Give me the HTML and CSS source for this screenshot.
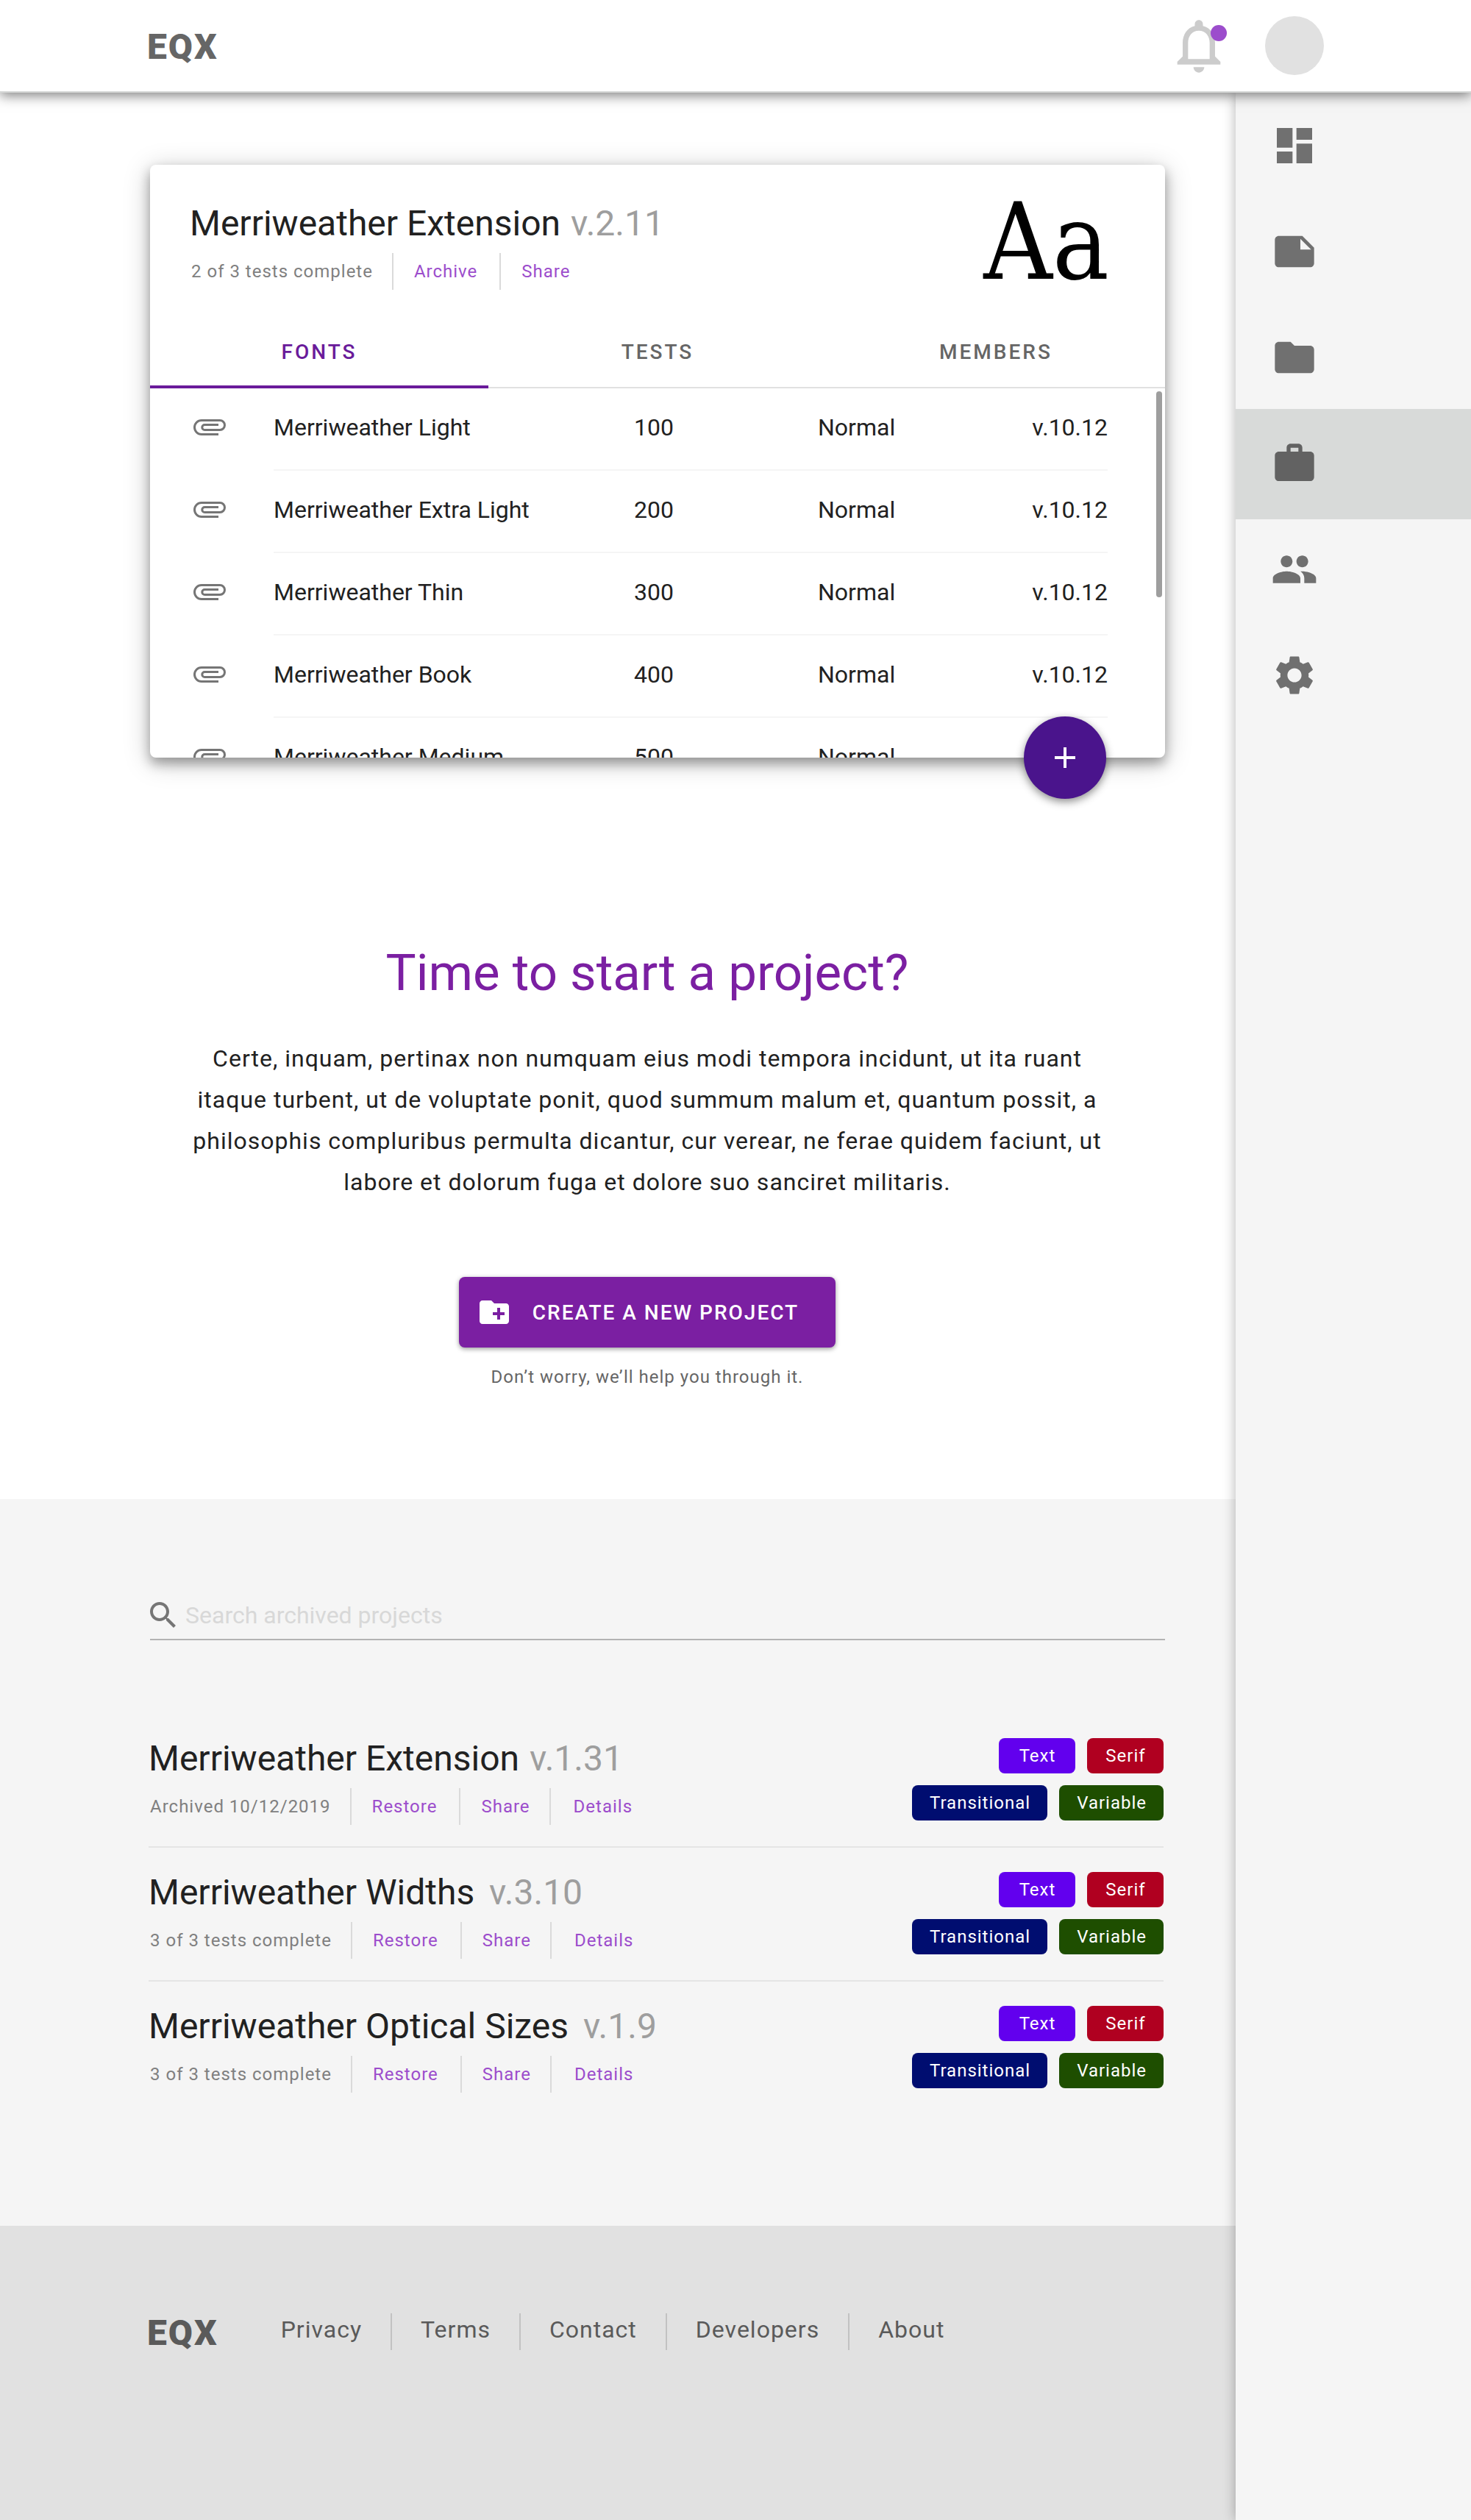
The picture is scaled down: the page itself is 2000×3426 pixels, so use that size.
FILE: index.html
```html
<!DOCTYPE html>
<html lang="en">
<head>
<meta charset="utf-8">
<meta name="viewport" content="width=device-width, initial-scale=1">
<title>EQX</title>
<link rel="stylesheet" href="styles.css">
</head>
<body>
<svg class="sprite" aria-hidden="true">
  <symbol id="clip" viewBox="0 0 44 22"><path fill="none" stroke="currentColor" stroke-width="3" d="M34 20.5H11a9.500 9.500 0 0 1 0-19H36a6.500 6.500 0 0 1 0 13H15.300a3.500 3.500 0 0 1 0-7H34"/></symbol>
</svg>

<header class="topbar">
  <a class="logo" href="#">EQX</a>
  <div class="topbar-actions">
    <button class="bell" type="button" aria-label="Notifications">
      <svg viewBox="0 0 24 24"><path d="M12 22c1.1 0 2-.9 2-2h-4c0 1.1.9 2 2 2zm6-6v-5c0-3.07-1.63-5.64-4.5-6.32V4c0-.83-.67-1.5-1.5-1.5s-1.5.67-1.5 1.5v.68C7.64 5.36 6 7.92 6 11v5l-2 2v1h16v-1l-2-2zm-2 1H8v-6c0-2.48 1.51-4.5 4-4.5s4 2.02 4 4.5v6z"/></svg>
      <span class="bell-dot"></span>
    </button>
    <button class="avatar" type="button" aria-label="Account"></button>
  </div>
</header>

<div class="layout">
  <div class="content">
    <main class="main">
      <section class="card">
        <div class="card-head">
          <div>
            <h1 class="title">Merriweather Extension <span class="version">v.2.11</span></h1>
            <div class="meta">
              <span class="meta-status">2 of 3 tests complete</span>
              <a class="meta-link" href="#">Archive</a>
              <a class="meta-link" href="#">Share</a>
            </div>
          </div>
          <div class="specimen">Aa</div>
        </div>
        <div class="tabs" role="tablist">
          <button class="tab tab-active" type="button" role="tab" aria-selected="true">FONTS</button>
          <button class="tab" type="button" role="tab" aria-selected="false">TESTS</button>
          <button class="tab" type="button" role="tab" aria-selected="false">MEMBERS</button>
        </div>
        <div class="font-list">
          <table class="fonts">
            <tr><td class="c-icon"><svg class="clip"><use href="#clip"/></svg></td><td class="c-name">Merriweather Light</td><td class="c-weight">100</td><td class="c-style">Normal</td><td class="c-version">v.10.12</td></tr>
            <tr><td class="c-icon"><svg class="clip"><use href="#clip"/></svg></td><td class="c-name">Merriweather Extra Light</td><td class="c-weight">200</td><td class="c-style">Normal</td><td class="c-version">v.10.12</td></tr>
            <tr><td class="c-icon"><svg class="clip"><use href="#clip"/></svg></td><td class="c-name">Merriweather Thin</td><td class="c-weight">300</td><td class="c-style">Normal</td><td class="c-version">v.10.12</td></tr>
            <tr><td class="c-icon"><svg class="clip"><use href="#clip"/></svg></td><td class="c-name">Merriweather Book</td><td class="c-weight">400</td><td class="c-style">Normal</td><td class="c-version">v.10.12</td></tr>
            <tr><td class="c-icon"><svg class="clip"><use href="#clip"/></svg></td><td class="c-name">Merriweather Medium</td><td class="c-weight">500</td><td class="c-style">Normal</td><td class="c-version"></td></tr>
          </table>
          <div class="scroll-thumb"></div>
        </div>
        <button class="fab" type="button" aria-label="Add font"><svg viewBox="0 0 24 24"><path d="M19 13h-6v6h-2v-6H5v-2h6V5h2v6h6v2z"/></svg></button>
      </section>

      <section class="intro">
        <h2 class="intro-title">Time to start a project?</h2>
        <p class="intro-text">Certe, inquam, pertinax non numquam eius modi tempora incidunt, ut ita ruant itaque turbent, ut de voluptate ponit, quod summum malum et, quantum possit, a philosophis compluribus permulta dicantur, cur verear, ne ferae quidem faciunt, ut labore et dolorum fuga et dolore suo sanciret militaris.</p>
        <button class="create" type="button">
          <svg viewBox="0 0 24 24"><path d="M20 6h-8l-2-2H4c-1.11 0-1.99.89-1.99 2L2 18c0 1.11.89 2 2 2h16c1.11 0 2-.89 2-2V8c0-1.11-.89-2-2-2zm-1 8h-3v3h-2v-3h-3v-2h3V9h2v3h3v2z"/></svg>
          CREATE A NEW PROJECT
        </button>
        <p class="intro-note">Don’t worry, we’ll help you through it.</p>
      </section>
    </main>

    <section class="archive">
      <label class="search">
        <svg viewBox="0 0 24 24"><path d="M15.5 14h-.79l-.28-.27C15.41 12.59 16 11.11 16 9.5 16 5.91 13.09 3 9.5 3S3 5.91 3 9.5 5.91 16 9.5 16c1.61 0 3.09-.59 4.23-1.57l.27.28v.79l5 4.99L20.49 19l-4.99-5zm-6 0C7.01 14 5 11.99 5 9.5S7.01 5 9.5 5 14 7.01 14 9.5 11.99 14 9.5 14z"/></svg>
        <input type="search" placeholder="Search archived projects" aria-label="Search archived projects">
      </label>
      <ul class="entries">
        <li class="entry">
          <div>
            <h3 class="title">Merriweather Extension <span class="version">v.1.31</span></h3>
            <div class="meta">
              <span class="meta-status">Archived 10/12/2019</span>
              <a class="meta-link" href="#">Restore</a>
              <a class="meta-link" href="#">Share</a>
              <a class="meta-link" href="#">Details</a>
            </div>
          </div>
          <div class="tags"><span class="tag tag-text">Text</span><span class="tag tag-serif">Serif</span><span class="tag tag-transitional">Transitional</span><span class="tag tag-variable">Variable</span></div>
        </li>
        <li class="entry">
          <div>
            <h3 class="title title-wide">Merriweather Widths <span class="version">v.3.10</span></h3>
            <div class="meta">
              <span class="meta-status">3 of 3 tests complete</span>
              <a class="meta-link" href="#">Restore</a>
              <a class="meta-link" href="#">Share</a>
              <a class="meta-link" href="#">Details</a>
            </div>
          </div>
          <div class="tags"><span class="tag tag-text">Text</span><span class="tag tag-serif">Serif</span><span class="tag tag-transitional">Transitional</span><span class="tag tag-variable">Variable</span></div>
        </li>
        <li class="entry">
          <div>
            <h3 class="title title-wide">Merriweather Optical Sizes <span class="version">v.1.9</span></h3>
            <div class="meta">
              <span class="meta-status">3 of 3 tests complete</span>
              <a class="meta-link" href="#">Restore</a>
              <a class="meta-link" href="#">Share</a>
              <a class="meta-link" href="#">Details</a>
            </div>
          </div>
          <div class="tags"><span class="tag tag-text">Text</span><span class="tag tag-serif">Serif</span><span class="tag tag-transitional">Transitional</span><span class="tag tag-variable">Variable</span></div>
        </li>
      </ul>
    </section>

    <footer class="footer">
      <a class="logo" href="#">EQX</a>
      <nav class="footer-nav">
        <a href="#">Privacy</a>
        <a href="#">Terms</a>
        <a href="#">Contact</a>
        <a href="#">Developers</a>
        <a href="#">About</a>
      </nav>
    </footer>
  </div>

  <nav class="sidebar" aria-label="Sections">
    <a class="side-item" href="#" aria-label="Dashboard"><svg viewBox="0 0 24 24"><path d="M3 13h8V3H3v10zm0 8h8v-6H3v6zm10 0h8V11h-8v10zm0-18v6h8V3h-8z"/></svg></a>
    <a class="side-item" href="#" aria-label="Notes"><svg viewBox="0 0 24 24"><path d="M22 10l-6-6H4c-1.1 0-2 .9-2 2v12.01c0 1.1.9 1.99 2 1.99l16-.01c1.1 0 2-.89 2-1.99v-8zm-7-4.5l5.5 5.5H15V5.5z"/></svg></a>
    <a class="side-item" href="#" aria-label="Files"><svg viewBox="0 0 24 24"><path d="M10 4H4c-1.1 0-1.99.9-1.99 2L2 18c0 1.1.9 2 2 2h16c1.1 0 2-.9 2-2V8c0-1.1-.9-2-2-2h-8l-2-2z"/></svg></a>
    <a class="side-item side-active" href="#" aria-label="Projects" aria-current="page"><svg viewBox="0 0 24 24"><path d="M20 6h-4V4c0-1.11-.89-2-2-2h-4c-1.11 0-2 .89-2 2v2H4c-1.11 0-2 .89-2 2v11c0 1.11.89 2 2 2h16c1.11 0 2-.89 2-2V8c0-1.11-.89-2-2-2zm-6 0h-4V4h4v2z"/></svg></a>
    <a class="side-item" href="#" aria-label="People"><svg viewBox="0 0 24 24"><path d="M16 11c1.66 0 2.99-1.34 2.99-3S17.66 5 16 5s-3 1.34-3 3 1.34 3 3 3zm-8 0c1.66 0 2.99-1.34 2.99-3S9.66 5 8 5 5 6.34 5 8s1.34 3 3 3zm0 2c-2.33 0-7 1.17-7 3.5V19h14v-2.500c0-2.330-4.670-3.500-7-3.500zm8 0c-.29 0-.62.02-.97.05 1.160.84 1.970 1.970 1.970 3.450V19h6v-2.500c0-2.330-4.670-3.500-7-3.500z"/></svg></a>
    <a class="side-item" href="#" aria-label="Settings"><svg viewBox="0 0 24 24"><path d="M19.140 12.940c.04-.3.06-.61.06-.94 0-.32-.02-.64-.07-.94l2.030-1.580c.18-.14.23-.41.12-.61l-1.920-3.320c-.12-.22-.37-.29-.59-.22l-2.390.96c-.5-.38-1.030-.7-1.620-.94l-.36-2.540c-.04-.24-.24-.41-.48-.41h-3.840c-.24 0-.43.17-.47.41l-.36 2.540c-.59.24-1.130.57-1.620.94l-2.390-.96c-.22-.08-.47 0-.59.22L2.740 8.870c-.12.21-.08.47.12.61l2.030 1.580c-.05.3-.09.63-.09.94s.02.64.07.94l-2.030 1.580c-.18.14-.23.41-.12.61l1.920 3.320c.12.22.37.29.59.22l2.390-.96c.5.38 1.030.7 1.620.94l.36 2.540c.05.24.24.41.48.41h3.840c.24 0 .44-.17.47-.41l.36-2.540c.59-.24 1.130-.56 1.620-.94l2.390.96c.22.08.47 0 .59-.22l1.920-3.320c.12-.22.07-.47-.12-.61l-2.010-1.580zM12 15.600c-1.980 0-3.600-1.620-3.600-3.600s1.620-3.600 3.600-3.600 3.600 1.620 3.600 3.600-1.620 3.600-3.600 3.600z"/></svg></a>
  </nav>
</div>
</body>
</html>
```
FILE: styles.css
```css
* { box-sizing: border-box; }

body {
  margin: 0;
  min-height: 100vh;
  display: flex;
  flex-direction: column;
  background: #fff;
  color: #212121;
  font-family: Roboto, "Liberation Sans", sans-serif;
  font-size: 32px;
}

h1, h2, h3, p, ul { margin: 0; padding: 0; font-weight: 400; }
a { color: inherit; text-decoration: none; }
button { font: inherit; border: 0; padding: 0; background: none; color: inherit; cursor: pointer; }
svg { display: block; fill: currentColor; }
.sprite { display: none; }

/* Top bar */
.topbar {
  position: relative;
  z-index: 2;
  display: flex;
  align-items: center;
  justify-content: space-between;
  height: 126px;
  padding: 0 200px;
  background: #fff;
  border-bottom: 2px solid #d6d8d7;
  box-shadow: 0 4px 16px rgba(0, 0, 0, .5);
}
.logo { padding-top: 3px; color: #666; font-size: 48px; font-weight: 900; line-height: 48px; letter-spacing: 2px; }
.topbar-actions { display: flex; align-items: center; gap: 46px; }
.bell { position: relative; color: #ccc; }
.bell svg { width: 88px; height: 88px; }
.bell-dot { position: absolute; top: 16px; right: 6px; width: 22px; height: 22px; border-radius: 50%; background: #9c4dcc; }
.avatar { width: 80px; height: 80px; border-radius: 50%; background: #e1e1e1; }

/* Page columns */
.layout { flex: 1; display: grid; grid-template-columns: minmax(0, 1fr) 320px; }
.content { display: flex; flex-direction: column; }
.sidebar { display: flex; flex-direction: column; background: #f5f5f5; color: #707070; box-shadow: 0 0 16px rgba(0, 0, 0, .3); }
.side-item { display: flex; align-items: center; height: 144px; padding-left: 48px; }
.side-item svg { width: 64px; height: 64px; }
.side-active { height: 150px; margin: -2px 0 -4px; padding-bottom: 2px; background: #d8dad9; color: #626262; }

/* Project card */
.main { padding: 98px 96px 150px 204px; }
.card { position: relative; border-radius: 8px; background: #fff; box-shadow: 0 8px 16px rgba(0, 0, 0, .32), 0 6px 36px rgba(0, 0, 0, .22); }
.card-head { display: flex; justify-content: space-between; height: 206px; padding: 52px 76px 0 54px; }
.title { font-size: 48px; line-height: 56px; }
.version { margin-left: 2px; color: #9e9e9e; }
.title-wide .version { margin-left: 8px; }
.meta { display: flex; align-items: center; margin-top: 12px; color: #808080; font-size: 24px; line-height: 50px; letter-spacing: 1px; }
.meta-status { padding: 0 26px 0 2px; }
.meta-link { padding: 0 30px 0 28px; border-left: 2px solid #dadada; color: #9c4dcc; }
.specimen { color: #000; font-family: "DejaVu Serif Condensed", "DejaVu Serif", serif; font-size: 144px; line-height: 106px; }

.tabs { display: grid; grid-template-columns: repeat(3, 1fr); height: 98px; border-bottom: 2px solid #e1e1e1; }
.tab { height: 98px; padding-top: 2px; color: #666; font-size: 28px; font-weight: 500; letter-spacing: 3px; border-bottom: 4px solid transparent; }
.tab-active { color: #6a1b9a; border-bottom-color: #6a1b9a; }

.font-list { position: relative; height: 502px; overflow: hidden; border-radius: 0 0 8px 8px; }
.fonts { width: calc(100% - 78px); border-spacing: 0; table-layout: fixed; }
.fonts td { height: 112px; padding: 0 0 4px; border-bottom: 2px solid #f5f5f5; vertical-align: middle; white-space: nowrap; }
.fonts .c-icon { width: 168px; border-bottom-color: transparent; }
.clip { width: 44px; height: 22px; margin-left: 59px; color: #757575; }
.c-name { width: 490px; }
.c-weight { width: 250px; }
.c-version { text-align: right; }
.scroll-thumb { position: absolute; top: 4px; right: 4px; width: 8px; height: 280px; border-radius: 4px; background: #9e9e9e; }
.fab { position: absolute; right: 80px; bottom: -56px; display: grid; place-items: center; width: 112px; height: 112px; border-radius: 50%; background: #4a148c; color: #fff; box-shadow: 0 4px 12px rgba(0, 0, 0, .45); }
.fab svg { width: 48px; height: 48px; }

/* Call to action */
.intro { display: flex; flex-direction: column; align-items: center; margin: 253px 24px 0 -4px; text-align: center; }
.intro-title { color: #7b1fa2; font-size: 69px; line-height: 80px; }
.intro-text { max-width: 1260px; margin-top: 48px; line-height: 56px; letter-spacing: 1px; }
.create { display: flex; align-items: center; gap: 28px; height: 96px; margin-top: 101px; padding: 0 50px 0 24px; border-radius: 8px; background: #7b1fa2; color: #fff; font-size: 28px; font-weight: 500; letter-spacing: 2px; box-shadow: 0 2px 6px rgba(0, 0, 0, .4); }
.create svg { width: 48px; height: 48px; }
.intro-note { margin-top: 24px; color: #666; font-size: 24px; line-height: 32px; letter-spacing: 1px; }

/* Archived projects */
.archive { padding: 130px 96px 150px 204px; background: #f5f5f5; }
.search { display: flex; align-items: center; gap: 6px; height: 62px; padding-bottom: 4px; border-bottom: 2px solid #b3b3b3; color: #757575; }
.search svg { width: 48px; height: 48px; margin-left: -6px; }
.search input { flex: 1; min-width: 0; height: 56px; padding: 0; border: 0; outline: 0; background: none; color: #212121; font: inherit; }
.search input::placeholder { color: #d8d8d8; opacity: 1; }
.entries { margin: 100px 2px 0 -2px; list-style: none; }
.entry { display: flex; justify-content: space-between; height: 182px; padding: 33px 0 0; border-bottom: 2px solid #e5e5e5; }
.entry:last-child { border-bottom: 0; }
.entry .meta-link:nth-child(3) { padding-right: 26px; }
.entry .meta-link:last-child { padding-left: 31px; }
.tags { display: flex; flex-wrap: wrap; justify-content: flex-end; align-content: flex-start; gap: 16px; width: 360px; }
.tag { height: 48px; padding: 0 23px 0 24px; border-radius: 8px; color: #fff; font-size: 24px; line-height: 48px; letter-spacing: 1px; text-align: center; }
.tag-text, .tag-serif { min-width: 104px; }
.tag-text { background: #6200ee; }
.tag-serif { background: #b00020; }
.tag-transitional { background: #000d70; }
.tag-variable { background: #1e4e00; }

/* Footer */
.footer { flex: 1; display: flex; align-items: flex-start; min-height: 400px; padding: 119px 96px 0 200px; background: #e1e1e1; }
.footer .logo { color: #5a5a5a; }
.footer-nav { display: flex; margin-left: 46px; color: #5a5a5a; line-height: 44px; letter-spacing: 1px; }
.footer-nav a { padding: 0 39px 6px; border-left: 2px solid #c2c2c2; }
.footer-nav a:first-child { border-left: 0; }
```
